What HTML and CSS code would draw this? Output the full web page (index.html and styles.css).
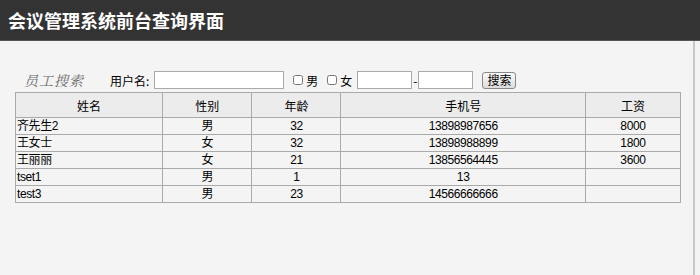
FILE: index.html
```html
<!DOCTYPE html>
<html lang="zh-CN">
<head>
    <meta charset="UTF-8">
    <title>会议管理系统前台查询界面</title>
    <link rel="stylesheet" href="styles.css">
</head>
<body>
    <div class="header">
        <h1>会议管理系统前台查询界面</h1>
    </div>
    <div class="main">
        <div class="search">
            <span class="search-title">员工搜索</span>
            <label class="field">用户名:<input type="text" class="input name-input"></label>
            <label class="check"><input type="checkbox"><span>男</span></label>
            <label class="check"><input type="checkbox"><span>女</span></label>
            <input type="text" class="input age-input"><span class="dash">-</span><input type="text" class="input age-input">
            <button class="button">搜索</button>
        </div>

        <table class="list">
            <colgroup>
                <col class="c-name">
                <col class="c-sex">
                <col class="c-age">
                <col class="c-phone">
                <col class="c-pay">
            </colgroup>
            <thead>
                <tr>
                    <th>姓名</th>
                    <th>性别</th>
                    <th>年龄</th>
                    <th>手机号</th>
                    <th>工资</th>
                </tr>
            </thead>
            <tbody>
                <tr><td class="left">齐先生2</td><td>男</td><td>32</td><td>13898987656</td><td>8000</td></tr>
                <tr><td class="left">王女士</td><td>女</td><td>32</td><td>13898988899</td><td>1800</td></tr>
                <tr><td class="left">王丽丽</td><td>女</td><td>21</td><td>13856564445</td><td>3600</td></tr>
                <tr><td class="left">tset1</td><td>男</td><td>1</td><td>13</td><td></td></tr>
                <tr><td class="left">test3</td><td>男</td><td>23</td><td>14566666666</td><td></td></tr>
            </tbody>
        </table>
    </div>
</body>
</html>
```

FILE: styles.css
```css
body {
    margin: 0;
    padding: 0;
    background-color: #f4f4f4;
    font-family: "Noto Sans CJK SC", "DejaVu Sans", sans-serif;
    font-size: 12px;
    color: #000;
}
.header {
    background-color: #333;
    height: 40px;
    border-bottom: 1px solid #555;
}
.header h1 {
    margin: 0;
    padding-left: 8px;
    color: #fff;
    font-size: 18px;
    line-height: 40px;
    font-weight: bold;
}
.main {
    width: 693px;
    height: 234px;
    border-right: 2px solid #c8c8c8;
}
.search {
    display: flex;
    align-items: center;
    height: 20px;
    padding: 29px 0 0 24px;
}
.search-title {
    font-family: "Noto Serif CJK SC", "Noto Sans CJK SC", serif;
    font-style: italic;
    font-size: 14px;
    color: #666;
    width: 86px;
    letter-spacing: 1px;
}
.field {
    display: flex;
    align-items: center;
}
.input {
    height: 18px;
    box-sizing: border-box;
    border: 1px solid #aaa;
    background: #fff;
    padding: 0 2px;
    font-size: 12px;
}
.name-input {
    width: 130px;
    margin-left: 5px;
}
.check {
    display: flex;
    align-items: center;
    margin-left: 9px;
}
.check input {
    width: 10px;
    height: 10px;
    margin: 0 3px 0 0;
}
.age-input {
    width: 55px;
}
.check + .age-input {
    margin-left: 5px;
}
.dash {
    width: 6px;
    text-align: center;
}
.button {
    margin-left: 9px;
    height: 17px;
    padding: 0 4px;
    font-size: 12px;
    line-height: 14px;
    border: 1px solid #888;
    border-radius: 3px;
    background: linear-gradient(#fafafa, #ddd);
    font-family: inherit;
}
.list {
    margin: 2px 0 0 15px;
    border-collapse: collapse;
    width: 666px;
    table-layout: fixed;
    font-family: "Liberation Sans", "Noto Sans CJK SC", sans-serif;
}
.list th,
.list td {
    border: 1px solid #aaa;
    padding: 0;
    text-align: center;
    font-weight: normal;
    white-space: nowrap;
    overflow: hidden;
}
.list th {
    background-color: #ececec;
    height: 24px;
}
.list td {
    height: 16px;
    line-height: 14px;
    letter-spacing: -0.4px;
}
.list td.left {
    text-align: left;
    padding-left: 1px;
}
.c-name { width: 147px; }
.c-sex { width: 89px; }
.c-age { width: 89px; }
.c-phone { width: 244px; }
.c-pay { width: 95px; }
```
